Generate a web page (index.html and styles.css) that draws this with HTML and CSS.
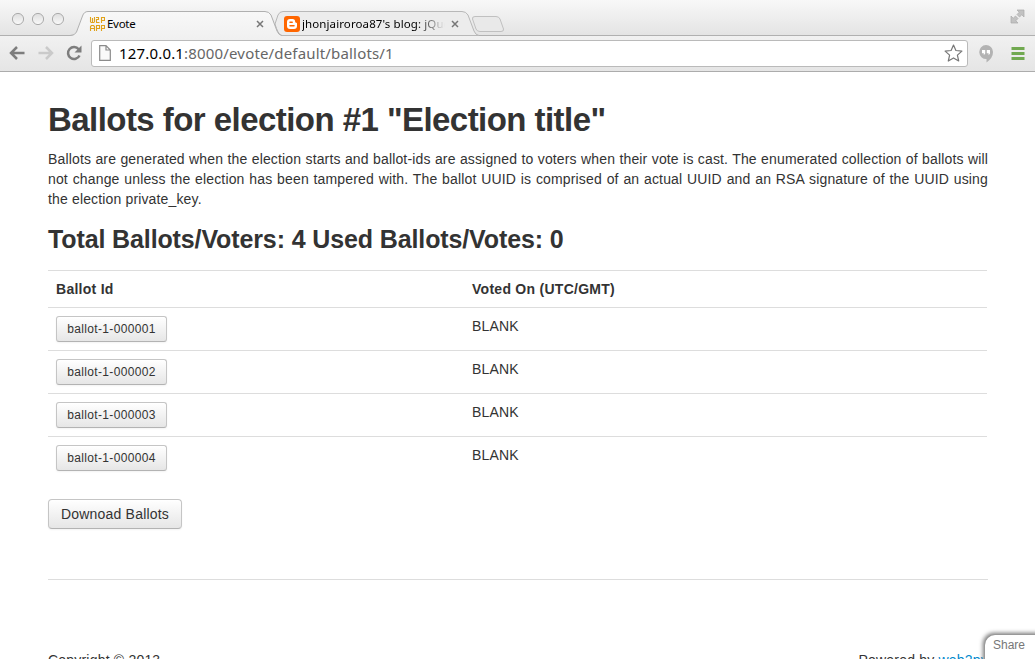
FILE: index.html
```html
<!DOCTYPE html>
<html lang="en">
<head>
<meta charset="utf-8">
<title>Evote</title>
<link rel="stylesheet" href="styles.css">
</head>
<body>
<div class="window">
  <header class="tabstrip">
    <svg class="strip-art" width="1035" height="36" viewBox="0 0 1035 36" fill="none">
      <defs>
        <linearGradient id="tab" x1="0" y1="0" x2="0" y2="1"><stop offset="0" stop-color="#f8f8f8"/><stop offset="1" stop-color="#f1f1f1"/></linearGradient>
        <linearGradient id="light" x1="0" y1="0" x2="0" y2="1"><stop offset="0" stop-color="#dedede"/><stop offset="1" stop-color="#fafafa"/></linearGradient>
      </defs>
      <path d="M0 35.5H1035" stroke="#b0b0b0"/>
      <path d="M275 24L278 15Q279.500 11.500 283 11.500H462Q466 11.500 468 15L474 31Q475.500 35 479 35.500H281Q278 34 275 24Z" fill="#ececec" stroke="#b8b8b8"/>
      <path d="M472.500 19Q472 16.500 475 16.500H496Q499 16.500 500 19L503.500 29Q504 31.500 501 31.500H480Q477 31.500 476 29Z" fill="#e9e9e9" stroke="#c0c0c0"/>
      <path d="M70 36Q75 35.500 76.500 32L82.500 16Q84 11.500 88 11.500H265Q269 11.500 271 15L277 31Q278.500 35 282 36Z" fill="url(#tab)"/>
      <path d="M70 35.500Q75 35.500 76.500 32L82.500 16Q84 11.500 88 11.500H265Q269 11.500 271 15L277 31Q278.500 35 282 35.500" stroke="#b0b0b0"/>
      <g fill="url(#light)" stroke="#ababab"><circle cx="18" cy="19" r="5.600"/><circle cx="38" cy="19" r="5.600"/><circle cx="58" cy="19" r="5.600"/></g>
    </svg>
    <div class="tab tab-first">
      <svg width="16" height="14" viewBox="0 0 16 14" fill="none" stroke="#e0a21a" stroke-width="1.100"><path d="M1.500 0V5M3.500 1V5M5.500 0V5M1.500 5.500H5.500M7 .5H9.500V2.500H7.500V5.500H10.500M12.500 6V.5H15.500V3.500H12.500M1.500 14V9.500L2.500 8.500H4.500L5.500 9.500V14M1.500 11.500H5.500M7.500 14V8.500H10.500V11.500H7.500M12.500 14V8.500H15.500V11.500H12.500"/></svg>
      <span class="tab-title">Evote</span>
      <svg class="close" width="8" height="8" viewBox="0 0 8 8"><path d="M1 1L7 7M7 1L1 7" stroke="#777" stroke-width="1.500"/></svg>
    </div>
    <div class="tab tab-second">
      <svg width="16" height="16" viewBox="0 0 16 16"><rect width="16" height="16" rx="3" fill="#ff6600"/><path d="M6 3H8.500Q11.200 3 11.200 6Q11.300 6.700 12.200 6.700Q13 6.800 13 7.600V10Q13 13 10 13H6Q3 13 3 10V6Q3 3 6 3Z" fill="#fff"/><path d="M6 6.200H8.200M6 9.800H10" stroke="#ff6600" stroke-width="1.500" stroke-linecap="round"/></svg>
      <span class="tab-title blog">jhonjairoroa87's blog: jQue</span>
      <svg class="close" width="8" height="8" viewBox="0 0 8 8"><path d="M1 1L7 7M7 1L1 7" stroke="#777" stroke-width="1.500"/></svg>
    </div>
    <svg class="expand" width="15" height="15" viewBox="0 0 15 15"><path d="M7 1H14V8L11.800 5.800L9.500 8L7 5.500L9.200 3.200ZM1 7L3.200 9.200L5.500 7L8 9.500L5.800 11.800L8 14H1Z" fill="#c2c2c2" stroke="#aaa" stroke-width=".7"/></svg>
  </header>
  <nav class="toolbar">
    <svg width="16" height="14" viewBox="0 0 16 14" fill="none" stroke="#7d7d7d" stroke-width="2.500"><path d="M15.500 7H2M8 1L2 7L8 13"/></svg>
    <svg class="forward" width="16" height="14" viewBox="0 0 16 14" fill="none" stroke="#cacaca" stroke-width="2.500"><path d="M.5 7H14M8 1L14 7L8 13"/></svg>
    <svg class="reload" width="16" height="16" viewBox="0 0 16 16"><path d="M12.700 4.200A6 6 0 1 0 13.500 10.500" fill="none" stroke="#7d7d7d" stroke-width="2.500"/><path d="M15.500 .5V7.500H8.500Z" fill="#7d7d7d"/></svg>
    <div class="address">
      <svg class="page-icon" width="12" height="16" viewBox="0 0 12 16"><path d="M.7 .7H7L11.300 5V15.300H.7ZM7 .7V5H11.300" fill="#fafafa" stroke="#8b8b8b" stroke-width="1.200"/></svg>
      <span class="url"><b>127.0.0.1</b>:8000/evote/default/ballots/1</span>
      <svg class="star" width="19" height="18" viewBox="0 0 19 18"><path d="M9.500 1L11.900 6.500L17.900 7.100L13.400 11.100L14.700 17L9.500 13.900L4.300 17L5.600 11.100L1.100 7.100L7.100 6.500Z" fill="#fff" stroke="#777" stroke-width="1.200" stroke-linejoin="round"/></svg>
    </div>
    <svg class="hangouts" width="14" height="18" viewBox="0 0 14 18"><path d="M7 0A7 7 0 0 1 14 7Q14 13 7.500 17.500V14A7 7 0 1 1 7 0Z" fill="#b3b3b3"/><path d="M3 5H6.200V8.500L4.800 10.200V8.300H3ZM7.800 5H11V8.500L9.600 10.200V8.300H7.800Z" fill="#fff"/></svg>
    <svg class="menu" width="14" height="13" viewBox="0 0 14 13"><path d="M.5 1.500H13.500M.5 6.500H13.500M.5 11.500H13.500" stroke="#71a950" stroke-width="2.800"/></svg>
  </nav>
  <main class="page">
    <h1>Ballots for election #1 "Election title"</h1>
    <p class="intro">Ballots are generated when the election starts and ballot-ids are assigned to voters when their vote is cast. The enumerated collection of ballots will not change unless the election has been tampered with. The ballot UUID is comprised of an actual UUID and an RSA signature of the UUID using the election private_key.</p>
    <h3>Total Ballots/Voters: 4 Used Ballots/Votes: 0</h3>
    <table class="ballots">
      <thead><tr><th class="id-col">Ballot Id</th><th>Voted On (UTC/GMT)</th></tr></thead>
      <tbody>
        <tr><td><a class="btn small">ballot-1-000001</a></td><td>BLANK</td></tr>
        <tr><td><a class="btn small">ballot-1-000002</a></td><td>BLANK</td></tr>
        <tr><td><a class="btn small">ballot-1-000003</a></td><td>BLANK</td></tr>
        <tr><td><a class="btn small">ballot-1-000004</a></td><td>BLANK</td></tr>
      </tbody>
    </table>
    <a class="btn download">Downoad Ballots</a>
    <footer class="footer"><span>Copyright © 2013</span><span>Powered by <a class="link">web2py</a></span></footer>
  </main>
  <div class="share">Share</div>
</div>
</body>
</html>
```

FILE: styles.css
```css
* { box-sizing: border-box; }
body { margin: 0; background: #fff; }
svg { display: block; flex: none; }
.window {
  position: relative;
  width: 1035px;
  height: 659px;
  overflow: hidden;
  color: #333;
  font: 14px/20px "Liberation Sans", Arial, sans-serif;
}
.tabstrip {
  position: relative;
  display: flex;
  height: 36px;
  padding: 11px 10px 0 89px;
  background: linear-gradient(#f8f8f8, #e3e3e3);
}
.strip-art { position: absolute; left: 0; top: 0; }
.tab {
  position: relative;
  display: flex;
  align-items: center;
  height: 25px;
  color: #000;
  font: 11.5px/16px "Noto Sans", sans-serif;
}
.tab-first { width: 175px; gap: 2px; letter-spacing: -.3px; }
.tab-second { width: 175px; margin-left: 20px; gap: 2px; }
.tab-title { white-space: nowrap; }
.blog {
  width: 143px;
  overflow: hidden;
  letter-spacing: .1px;
  -webkit-mask-image: linear-gradient(90deg, #000 80%, transparent);
  mask-image: linear-gradient(90deg, #000 80%, transparent);
}
.close { margin-left: auto; }
.expand { position: relative; margin-left: auto; margin-top: -2px; }
.toolbar {
  display: flex;
  align-items: center;
  height: 36px;
  padding: 0 10px 1px 9px;
  background: linear-gradient(#f1f1f1, #e5e5e5);
  border-bottom: 1px solid #acacac;
}
.forward { margin-left: 13px; }
.reload { margin-left: 12px; }
.address {
  display: flex;
  align-items: center;
  width: 877px;
  height: 27px;
  margin-left: 9px;
  padding: 0 4px 0 7px;
  background: #fff;
  border: 1px solid #bababa;
  border-radius: 3px;
}
.url {
  margin-left: 8px;
  color: #666;
  font: 15px/24px "Noto Sans", sans-serif;
  letter-spacing: .17px;
  white-space: nowrap;
}
.url b { color: #000; font-weight: 400; }
.star { margin-left: auto; }
.hangouts { margin: 1px 0 0 11px; }
.menu { margin-left: auto; }
.page { width: 940px; margin-left: 48px; padding-top: 28px; }
h1, h3 { margin: 0; white-space: nowrap; font-weight: 700; }
h1 { font-size: 33px; line-height: 40px; letter-spacing: -.55px; }
.intro { margin: 9px 0 10px; text-align: justify; letter-spacing: .15px; }
h3 { font-size: 25px; line-height: 40px; letter-spacing: -.12px; }
.ballots {
  width: 939px;
  margin: 11px 0 20px;
  border-spacing: 0;
  table-layout: fixed;
}
.ballots th, .ballots td {
  padding: 8px;
  border-top: 1px solid #ddd;
  text-align: left;
  vertical-align: top;
}
.ballots th { height: 37px; letter-spacing: .27px; }
.ballots td { height: 43px; letter-spacing: .15px; }
.id-col { width: 416px; }
.btn {
  display: block;
  width: max-content;
  border: 1px solid #c5c5c5;
  border-bottom-color: #b3b3b3;
  border-radius: 4px;
  background: linear-gradient(#fff, #e6e6e6);
  box-shadow: inset 0 1px 0 #fff, 0 1px 2px rgba(0, 0, 0, .05);
  text-align: center;
}
.ballots .small { width: 111px; height: 26px; border-radius: 3px; font-size: 12px; line-height: 24px; letter-spacing: .35px; }
.download { width: 134px; height: 30px; line-height: 28px; letter-spacing: .2px; }
.footer {
  display: flex;
  justify-content: space-between;
  margin-top: 50px;
  padding-top: 70px;
  border-top: 1px solid #ddd;
  letter-spacing: .2px;
}
.link { color: #0088cc; }
.share {
  position: absolute;
  left: 985px;
  top: 635px;
  width: 60px;
  height: 40px;
  padding-left: 8px;
  border-radius: 10px 0 0 0;
  background: #fff;
  box-shadow: -1px -1px 4px 1px #777;
  color: #777;
  font-size: 12px;
}
```
